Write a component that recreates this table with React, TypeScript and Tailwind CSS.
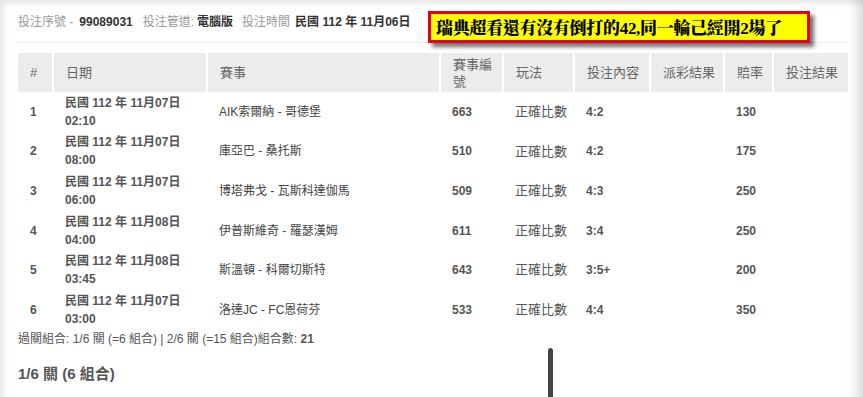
import React from 'react';

const font = { fontFamily: '"Liberation Sans", Arial, "Noto Sans CJK TC", sans-serif' };

const rows = [
  { n: 1, d: '11月07日', t: '02:10', m: 'AIK索爾納 - 哥德堡', id: '663', c: '4:2', o: '130' },
  { n: 2, d: '11月07日', t: '08:00', m: '庫亞巴 - 桑托斯', id: '510', c: '4:2', o: '175' },
  { n: 3, d: '11月07日', t: '06:00', m: '博塔弗戈 - 瓦斯科達伽馬', id: '509', c: '4:3', o: '250' },
  { n: 4, d: '11月08日', t: '04:00', m: '伊普斯維奇 - 羅瑟漢姆', id: '611', c: '3:4', o: '250' },
  { n: 5, d: '11月08日', t: '03:45', m: '斯溫頓 - 科爾切斯特', id: '643', c: '3:5+', o: '200' },
  { n: 6, d: '11月07日', t: '03:00', m: '洛達JC - FC恩荷芬', id: '533', c: '4:4', o: '350' },
];

const heads = ['#', '日期', '賽事', '賽事編號', '玩法', '投注內容', '派彩結果', '賠率', '投注結果'];
const widths = ['w-[35px]', 'w-[154px]', 'w-[233px]', 'w-[63px]', 'w-[71px]', 'w-[76px]', 'w-[74px]', 'w-[49px]', 'w-[75px]'];

export default function App() {
  return (
    <div
      className="relative w-[863px] h-[397px] overflow-hidden bg-white text-[#555] shadow-[inset_8px_8px_9px_-6px_rgba(0,0,0,0.13),inset_-16px_0_12px_-10px_rgba(0,0,0,0.14)]"
      style={font}
    >
      <div className="pl-[18px] pr-[15px]">
        {/* 投注資訊 */}
        <div className="flex items-center h-[43px] pt-[2px] border-b border-[#ececec] text-[12px]">
          <span className="text-[#999]">投注序號 -</span>
          <span className="font-bold text-[#333] ml-[6px]">99089031</span>
          <span className="text-[#999] ml-[10px]">投注管道:</span>
          <span className="font-bold text-[#333] ml-[3px]">電腦版</span>
          <span className="text-[#999] ml-[9px]">投注時間</span>
          <span className="font-bold text-[#333] ml-[5px]">民國 112 年 11月06日</span>
        </div>

        <table className="table-fixed w-[830px] mt-[10px] text-[12px] border-collapse">
          <colgroup>
            {widths.map((w, i) => (
              <col key={i} className={w} />
            ))}
          </colgroup>
          <thead>
            <tr className="bg-[#ececec] h-[39px]">
              {heads.map((h, i) => (
                <th
                  key={i}
                  className={`text-left font-normal text-[13px] leading-[17px] text-[#666] pl-[12px] pr-1 ${
                    i < heads.length - 1 ? 'border-r-2 border-white' : ''
                  } ${i === 0 ? 'pl-[11px]' : ''}`}
                >
                  {h}
                </th>
              ))}
            </tr>
          </thead>
          <tbody>
            {rows.map((r) => (
              <tr key={r.n} className="h-[39.6px]">
                <td className="pl-[12px] font-bold">{r.n}</td>
                <td className="pl-[12px] font-bold leading-[18px]">
                  <div>民國 112 年 {r.d}</div>
                  <div>{r.t}</div>
                </td>
                <td className="pl-[12px] text-[#444]">{r.m}</td>
                <td className="pl-[12px] font-bold">{r.id}</td>
                <td className="pl-[12px] text-[13px]">正確比數</td>
                <td className="pl-[12px] font-bold">{r.c}</td>
                <td></td>
                <td className="pl-[12px] font-bold">{r.o}</td>
                <td></td>
              </tr>
            ))}
          </tbody>
        </table>

        <div className="mt-0 text-[12px] text-[#555]">
          過關組合: 1/6 關 (=6 組合) | 2/6 關 (=15 組合)組合數: <span className="font-bold">21</span>
        </div>
        <div className="mt-[15px] text-[15px] font-bold text-[#555]">1/6 關 (6 組合)</div>
      </div>

      {/* 註解橫幅 */}
      <div className="absolute left-[428px] top-[11px] w-[382px] h-[32px] bg-[#ffff00] border-[3px] border-[#e5001c] shadow-[4px_4px_4px_rgba(0,0,0,0.55)] flex items-center pl-[5px]">
        <span
          className="text-[17px] font-black text-black tracking-[-0.3px] leading-none"
          style={{ fontFamily: '"Noto Serif CJK TC", "Noto Sans CJK TC", "Liberation Serif", serif' }}
        >
          瑞典超看還有沒有倒打的<span className="font-bold" style={{ fontFamily: '"Liberation Serif", serif' }}>42,</span>同一輪己經開<span className="font-bold" style={{ fontFamily: '"Liberation Serif", serif' }}>2</span>場了
        </span>
      </div>

      {/* 游標 */}
      <div className="absolute left-[548px] top-[348px] w-[5px] h-[60px] rounded-t-full bg-[#444]" />
    </div>
  );
}
